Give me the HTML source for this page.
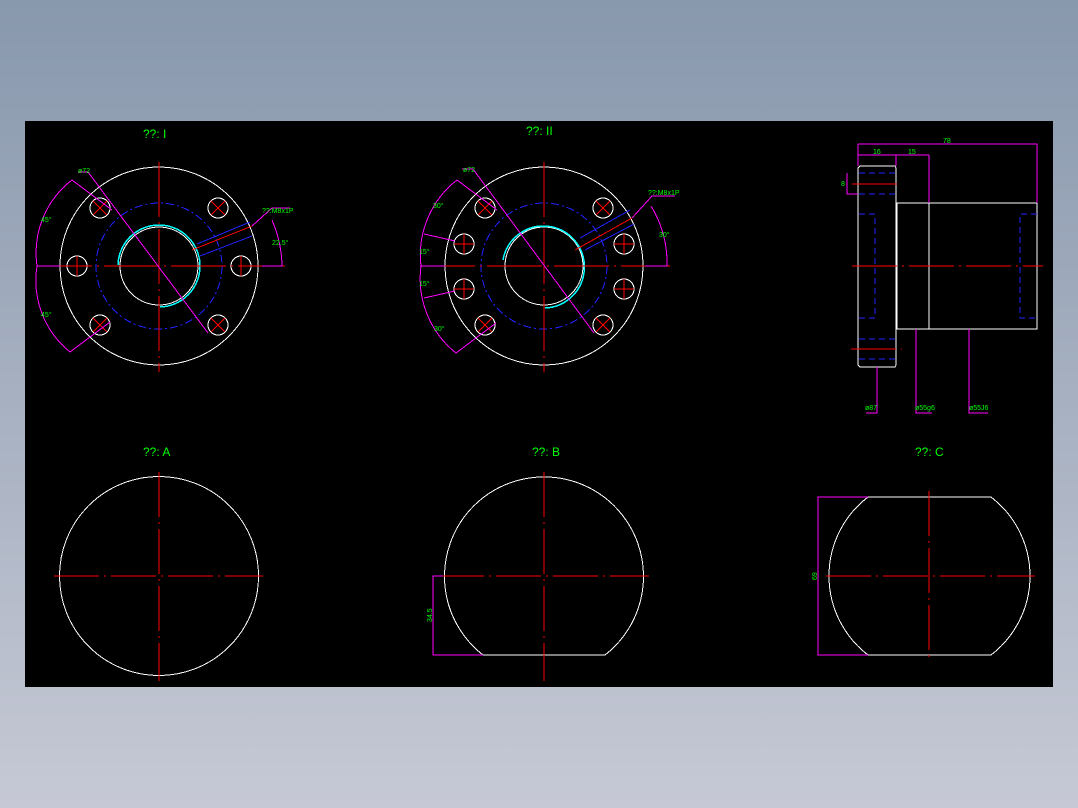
<!DOCTYPE html>
<html><head><meta charset="utf-8"><style>
html,body{margin:0;padding:0;width:1078px;height:808px;overflow:hidden;background:linear-gradient(#8898ad,#c6c9d5);}
svg{position:absolute;left:0;top:0}
svg *{shape-rendering:crispEdges}
text{font-family:"Liberation Sans",sans-serif;fill:#00ff00}
</style></head><body>
<svg width="1078" height="808" viewBox="0 0 1078 808">
<rect x="25" y="121" width="1028" height="566" fill="#000"/>
<g fill="none" stroke-width="1">
<!-- Flange I -->
<g>
<circle cx="159" cy="266" r="99" stroke="#fff"/>
<circle cx="159" cy="266" r="39" stroke="#fff"/>
<path d="M118,265 A41,41 0 1 1 160,307" stroke="#0ff" stroke-width="1.5"/>
<circle cx="159" cy="266" r="63" stroke="#22f" stroke-dasharray="8 3 2 3"/>
<g stroke="#fff"><circle cx="100" cy="208" r="10"/><circle cx="218" cy="208" r="10"/><circle cx="77" cy="266" r="10"/><circle cx="241" cy="266" r="10"/><circle cx="100" cy="325" r="10"/><circle cx="218" cy="325" r="10"/></g>
<g stroke="#f00"><path d="M93,201L107,215M107,201L93,215M211,201L225,215M225,201L211,215M93,318L107,332M107,318L93,332M211,318L225,332M225,318L211,332M77,256V276M241,256V276"/>
<path d="M37,266H285M159,162V372" stroke-dasharray="55 5 2 5"/>
<path d="M192,250L252,226"/></g>
<path d="M197,244L250,222M200,256L252,236" stroke="#22f"/>
<g stroke="#f0f"><path d="M78,172H88L208,333M72,180A92,92 0 0 0 37,266A92,92 0 0 0 70,352M72,180L112,210M70,352L110,322M37,266H60M252,226L272,208H290M272,220A120,120 0 0 1 282,266H262"/></g>
<text x="143" y="138" font-size="12">??: I</text>
<text x="78" y="173" font-size="7">ø72</text>
<text x="41" y="222" font-size="7">45°</text>
<text x="41" y="317" font-size="7">45°</text>
<text x="262" y="213" font-size="7">??:M8x1P</text>
<text x="272" y="245" font-size="7">22.5°</text>
</g>
<!-- Flange II -->
<g>
<circle cx="544" cy="266" r="99" stroke="#fff"/>
<circle cx="544" cy="266" r="39" stroke="#fff"/>
<path d="M503,260 A41,41 0 1 1 545,308" stroke="#0ff" stroke-width="1.5"/>
<circle cx="544" cy="266" r="63" stroke="#22f" stroke-dasharray="8 3 2 3"/>
<g stroke="#fff"><circle cx="485" cy="208" r="10"/><circle cx="603" cy="208" r="10"/><circle cx="464" cy="244" r="10"/><circle cx="464" cy="289" r="10"/><circle cx="485" cy="325" r="10"/><circle cx="603" cy="325" r="10"/><circle cx="624" cy="244" r="10"/><circle cx="624" cy="289" r="10"/></g>
<g stroke="#f00"><path d="M478,201L492,215M492,201L478,215M596,201L610,215M610,201L596,215M478,318L492,332M492,318L478,332M596,318L610,332M610,318L596,332M454,244H474M464,234V254M454,289H474M464,279V299M614,244H634M624,234V254M614,289H634M624,279V299"/>
<path d="M420,266H670M544,162V372" stroke-dasharray="55 5 2 5"/>
<path d="M575,250L632,218"/></g>
<path d="M580,238L630,210M585,250L634,224" stroke="#22f"/>
<g stroke="#f0f"><path d="M462,169H473L594,333M457,180A95,95 0 0 0 421,266A95,95 0 0 0 456,353M457,180L497,210M456,353L496,323M424,234L455,241M424,298L455,291M420,266H445M632,218L652,196H675M651,206A110,110 0 0 1 667,266H645"/></g>
<text x="526" y="135" font-size="12">??: II</text>
<text x="463" y="172" font-size="7">ø72</text>
<text x="433" y="208" font-size="7">30°</text>
<text x="419" y="254" font-size="7">15°</text>
<text x="419" y="286" font-size="7">15°</text>
<text x="434" y="331" font-size="7">30°</text>
<text x="648" y="195" font-size="7">??:M8x1P</text>
<text x="659" y="237" font-size="7">30°</text>
</g>
<!-- Side view -->
<g>
<path d="M858,168L860,166H895L896,168V365L895,367H860L858,365Z" stroke="#fff"/>
<rect x="897" y="203" width="140" height="126" stroke="#fff"/>
<path d="M929,155V329" stroke="#fff"/>
<path d="M859,173H896M859,194H896M859,339H896M859,359H896M859,214H875V318H859M1037,214H1020V318H1037" stroke="#22f" stroke-dasharray="6 4"/>
<path d="M852,266H1043M852,184H902M851,349H902" stroke="#f00" stroke-dasharray="45 5 2 5"/>
<g stroke="#f0f"><path d="M858,144H1037V203M858,144V166M858,155H929M896,155V166M929,155V203M847,173V194H858M847,173V194M877,367V413H866M916,329V413H932M969,329V413H988"/></g>
<text x="943" y="143" font-size="7">78</text>
<text x="873" y="154" font-size="7">16</text>
<text x="908" y="154" font-size="7">15</text>
<text x="841" y="186" font-size="7">8</text>
<text x="865" y="410" font-size="7">ø87</text>
<text x="915" y="410" font-size="7">ø55g6</text>
<text x="969" y="410" font-size="7">ø55J6</text>
</g>
<!-- A -->
<circle cx="159" cy="576" r="99.5" stroke="#fff"/>
<path d="M54,576H263M159,472V681" stroke="#f00" stroke-dasharray="45 5 2 5"/>
<text x="143" y="456" font-size="12">??: A</text>
<!-- B -->
<path d="M483,655A99.5,99.5 0 1 1 605,655Z" stroke="#fff"/>
<path d="M439,576H649M544,472V681" stroke="#f00" stroke-dasharray="45 5 2 5"/>
<path d="M443,576H433V655H483" stroke="#f0f"/>
<text x="532" y="456" font-size="12">??: B</text>
<text x="432" y="622" font-size="7" transform="rotate(-90 432 622)">34.5</text>
<!-- C -->
<path d="M868,497H991A99.5,99.5 0 0 1 991,655H868A99.5,99.5 0 0 1 868,497Z" stroke="#fff"/>
<path d="M826,576H1035M929,491V662" stroke="#f00" stroke-dasharray="45 5 2 5"/>
<path d="M868,497H818V655H868" stroke="#f0f"/>
<text x="915" y="456" font-size="12">??: C</text>
<text x="817" y="580" font-size="7" transform="rotate(-90 817 580)">69</text>
</g>
</svg>
</body></html>
